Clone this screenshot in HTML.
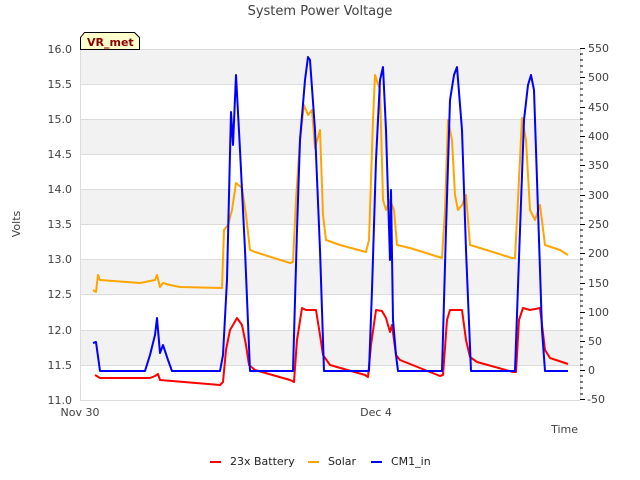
<!DOCTYPE html>
<html><head><meta charset="utf-8"><style>
html,body{margin:0;padding:0;background:#fff;}
svg{display:block;font-family:"DejaVu Sans","Liberation Sans",sans-serif;}
</style></head><body>
<svg width="640" height="480" viewBox="0 0 640 480" xmlns="http://www.w3.org/2000/svg">
<rect width="640" height="480" fill="#fff"/>
<text x="320" y="15" font-size="13" fill="#404040" text-anchor="middle">System Power Voltage</text>
<g fill="#f2f2f2">
<rect x="80" y="49" width="500" height="35"/>
<rect x="80" y="119" width="500" height="35"/>
<rect x="80" y="189" width="500" height="35"/>
<rect x="80" y="259" width="500" height="35"/>
<rect x="80" y="330" width="500" height="35"/>
</g>
<g stroke="#dcdcdc" stroke-width="1">
<line x1="80" y1="49.5" x2="580" y2="49.5"/><line x1="80" y1="84.5" x2="580" y2="84.5"/>
<line x1="80" y1="119.5" x2="580" y2="119.5"/><line x1="80" y1="154.5" x2="580" y2="154.5"/>
<line x1="80" y1="189.5" x2="580" y2="189.5"/><line x1="80" y1="224.5" x2="580" y2="224.5"/>
<line x1="80" y1="259.5" x2="580" y2="259.5"/><line x1="80" y1="294.5" x2="580" y2="294.5"/>
<line x1="80" y1="330.5" x2="580" y2="330.5"/><line x1="80" y1="365.5" x2="580" y2="365.5"/>
<line x1="80" y1="400.5" x2="580" y2="400.5"/>
<line x1="80.5" y1="49" x2="80.5" y2="400"/><line x1="580.5" y1="49" x2="580.5" y2="400"/>
</g>
<g font-size="11" fill="#404040" text-anchor="end">
<text x="72" y="53">16.0</text><text x="72" y="88">15.5</text><text x="72" y="123">15.0</text>
<text x="72" y="158">14.5</text><text x="72" y="193">14.0</text><text x="72" y="228">13.5</text>
<text x="72" y="263">13.0</text><text x="72" y="298">12.5</text><text x="72" y="334">12.0</text>
<text x="72" y="369">11.5</text><text x="72" y="404">11.0</text>
</g>
<g stroke="#000" stroke-width="1">
<line x1="580" y1="48.5" x2="585" y2="48.5"/><line x1="580" y1="77.5" x2="585" y2="77.5"/>
<line x1="580" y1="107.5" x2="585" y2="107.5"/><line x1="580" y1="136.5" x2="585" y2="136.5"/>
<line x1="580" y1="165.5" x2="585" y2="165.5"/><line x1="580" y1="195.5" x2="585" y2="195.5"/>
<line x1="580" y1="224.5" x2="585" y2="224.5"/><line x1="580" y1="253.5" x2="585" y2="253.5"/>
<line x1="580" y1="283.5" x2="585" y2="283.5"/><line x1="580" y1="312.5" x2="585" y2="312.5"/>
<line x1="580" y1="341.5" x2="585" y2="341.5"/><line x1="580" y1="370.5" x2="585" y2="370.5"/>
<line x1="580" y1="399.5" x2="585" y2="399.5"/>
</g>
<g stroke="#000" stroke-width="1" stroke-dasharray="1 4.86">
<line x1="580" y1="54.3" x2="583" y2="54.3"/>
<line x1="580" y1="54.3" x2="580" y2="54.3"/>
</g>
<path d="M580 54h3M580 60h3M580 66h3M580 72h3M580 83h3M580 89h3M580 95h3M580 101h3M580 113h3M580 119h3M580 125h3M580 131h3M580 142h3M580 148h3M580 154h3M580 160h3M580 171h3M580 177h3M580 183h3M580 189h3M580 201h3M580 207h3M580 213h3M580 218h3M580 230h3M580 236h3M580 242h3M580 248h3M580 259h3M580 265h3M580 271h3M580 277h3M580 289h3M580 295h3M580 301h3M580 306h3M580 318h3M580 324h3M580 330h3M580 336h3M580 347h3M580 353h3M580 359h3M580 365h3M580 376h3M580 382h3M580 388h3M580 394h3" stroke="#000" stroke-width="1"/>
<g font-size="11" fill="#404040">
<text x="588" y="52">550</text><text x="588" y="81">500</text><text x="588" y="111">450</text>
<text x="588" y="140">400</text><text x="588" y="169">350</text><text x="588" y="199">300</text>
<text x="588" y="228">250</text><text x="588" y="257">200</text><text x="588" y="287">150</text>
<text x="588" y="316">100</text><text x="588" y="345">50</text><text x="588" y="374">0</text>
<text x="587" y="403">-50</text>
</g>
<text x="80" y="416" font-size="11" fill="#404040" text-anchor="middle">Nov 30</text>
<text x="376" y="416" font-size="11" fill="#404040" text-anchor="middle">Dec 4</text>
<text x="578" y="433" font-size="11" fill="#404040" text-anchor="end">Time</text>
<text x="20" y="224" font-size="11" fill="#404040" text-anchor="middle" transform="rotate(-90 20 224)">Volts</text>
<g fill="none" stroke-width="2" stroke-linejoin="round">
<polyline stroke="#ff0000" points="95,375 100,378 150,378 155,376 158,374 160,380 220,385 223,382 226,350 230,330 233,325 237,318 242,325 246,345 249,365 255,370 290,380 294,382 297,340 302,308 306,310 316,310 320,335 323,355 330,365 365,375 368,377 371,345 376,310 382,311 386,318 390,332 392,325 396,355 400,360 440,376 443,375 447,320 450,310 462,310 466,340 470,357 477,362 513,372 516,372 519,320 523,308 530,310 540,308 545,350 550,358 568,364"/>
<polyline stroke="#ffa500" points="93,290 96,292 98,275 100,280 140,283 155,280 157,275 160,287 163,283 170,285 180,287 222,288 224,230 228,225 232,210 236,183 242,188 246,215 250,250 255,252 290,263 293,262 296,200 300,140 304,105 308,115 312,110 315,148 320,130 323,215 326,240 340,245 366,252 369,240 373,120 375,75 380,90 383,200 386,210 390,200 394,210 397,245 410,248 442,258 445,210 448,120 452,140 455,195 458,210 462,205 466,195 470,245 480,248 512,258 515,258 518,200 522,118 526,140 530,210 535,220 540,205 545,245 560,250 568,255"/>
<polyline stroke="#0000ff" points="93,343 96,342 100,371 145,371 150,355 155,335 157,318 160,353 163,345 168,360 172,371 220,371 223,355 227,280 229,195 231,112 233,145 236,75 240,150 245,250 250,371 293,371 297,230 300,140 305,80 308,57 310,60 315,130 320,250 324,371 369,371 372,290 376,160 380,80 383,67 386,130 390,260 391,190 393,320 396,355 398,371 442,371 446,230 450,100 454,75 457,67 462,130 466,250 471,371 515,371 520,230 524,120 528,85 531,75 534,90 538,210 542,330 545,371 568,371"/>
</g>
<path d="M80.5 49.5 V37.5 L84.5 32.5 H134.5 L139.5 37.5 V49.5 Z" fill="#ffffcc" stroke="#000" stroke-width="1"/>
<text x="87" y="46" font-size="11" font-weight="bold" fill="#8b0000">VR_met</text>
<g stroke-width="2">
<line x1="210" y1="462" x2="221" y2="462" stroke="#ff0000"/>
<line x1="308" y1="462" x2="319" y2="462" stroke="#ffa500"/>
<line x1="371" y1="462" x2="382" y2="462" stroke="#0000ff"/>
</g>
<g font-size="11" fill="#222">
<text x="230" y="465">23x Battery</text>
<text x="328" y="465">Solar</text>
<text x="391" y="465">CM1_in</text>
</g>
</svg>
</body></html>
